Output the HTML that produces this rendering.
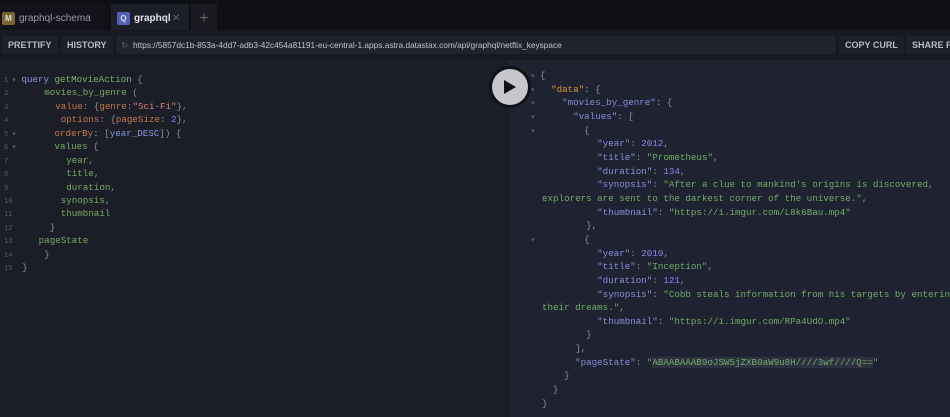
<!DOCTYPE html>
<html style="width:950px;height:417px;overflow:hidden"><head><style>
*{margin:0;padding:0;box-sizing:border-box}
body{width:950px;height:417px;background:#1c1e28;overflow:hidden;font-family:"Liberation Sans",sans-serif;position:relative}
.tabs{position:absolute;left:0;top:0;width:950px;height:30px;background:#0f1016}
.tab{position:absolute;top:4px;height:26px;font-size:10px;color:#9a9ca6;line-height:29px}
.ic{position:absolute;top:8px;width:13px;height:13px;border-radius:2px;font-size:8px;font-weight:bold;color:#ddd;text-align:center;line-height:13px}
.tb{position:absolute;top:30px;left:0;width:950px;height:30px;background:#171821}
.btn{position:absolute;top:6px;height:18px;line-height:18px;font-size:9px;font-weight:bold;color:#b8bac4;background:#1e2029;padding:0 6px;border-radius:2px}
.url{position:absolute;left:116px;top:6px;width:720px;height:18px;background:#20222d;border-radius:3px;font-size:8.3px;color:#c3c5cc;line-height:18px;padding-left:17px}
.pane{position:absolute}
pre{position:absolute;font-family:"Liberation Mono",monospace;font-size:9.2px;white-space:pre}
pre span{line-height:0}
.left{left:0;top:60px;width:509px;height:357px;background:#1b1d27}
.right{left:509px;top:60px;width:441px;height:357px;background:#1f2230}
.kw{color:#8a94dd}.df{color:#7fb56b}.pr{color:#76ab62}.ar{color:#c8784a}.st{color:#d98080}.nm{color:#8a87e6}
.k{color:#8591da}.s{color:#72ad67}.n{color:#8a87e6}.o{color:#d99a3a}
.ln{color:#5a5d68;font-size:7px}
</style></head><body>
<div class="tabs">
 <div class="tab" style="left:0;width:105px;background:#13141b"><div class="ic" style="left:2px;background:#7a6430">M</div><span style="position:absolute;left:19px">graphql-schema</span></div>
 <div class="tab" style="left:111px;width:78px;background:#1c1e28;color:#e2e3e8"><div class="ic" style="left:6px;background:#5360b8">Q</div><span style="position:absolute;left:23px;font-weight:bold">graphql</span><span style="position:absolute;left:61px;color:#666">✕</span></div>
 <div class="tab" style="left:191px;width:26px;background:#191a22;color:#666;font-size:16px;text-align:center">+</div>
</div>
<div class="tb">
 <div class="btn" style="left:2px">PRETTIFY</div>
 <div class="btn" style="left:61px">HISTORY</div>
 <div class="url"><span style="position:absolute;left:5px;color:#666">↻</span>https://5857dc1b-853a-4dd7-adb3-42c454a81191-eu-central-1.apps.astra.datastax.com/api/graphql/netflix_keyspace</div>
 <div class="btn" style="left:839px">COPY CURL</div>
 <div class="btn" style="left:906px;width:60px">SHARE PL</div>
</div>
<div class="pane left"></div>
<div class="pane right"></div>
<pre style="left:4px;top:73px;line-height:13.43px;color:#8c8f9a"><span class="ln">1 ▾</span> <span class="kw">query</span> <span class="df">getMovieAction</span> {
<span class="ln">2  </span>     <span class="pr">movies_by_genre</span> (
<span class="ln">3  </span>       <span class="ar">value</span>: {<span class="ar">genre</span>:<span class="st">"Sci-Fi"</span>},
<span class="ln">4  </span>        <span class="ar">options</span>: {<span class="ar">pageSize</span>: <span class="nm">2</span>},
<span class="ln">5 ▾</span>       <span class="ar">orderBy</span>: [<span class="kw">year_DESC</span>]) {
<span class="ln">6 ▾</span>       <span class="pr">values</span> {
<span class="ln">7  </span>         <span class="pr">year</span>,
<span class="ln">8  </span>         <span class="pr">title</span>,
<span class="ln">9  </span>         <span class="pr">duration</span>,
<span class="ln">10 </span>        <span class="pr">synopsis</span>,
<span class="ln">11 </span>        <span class="pr">thumbnail</span>
<span class="ln">12 </span>      }
<span class="ln">13 </span>    <span class="pr">pageState</span>
<span class="ln">14 </span>     }
<span class="ln">15 </span> }</pre>
<pre style="left:531px;top:69px;line-height:13.65px;color:#8c8f9a"><span class="ln">▾</span> {
<span class="ln">▾</span>   <span class="o">"data"</span>: {
<span class="ln">▾</span>     <span class="k">"movies_by_genre"</span>: {
<span class="ln">▾</span>       <span class="k">"values"</span>: [
<span class="ln">▾</span>         {
            <span class="k">"year"</span>: <span class="n">2012</span>,
            <span class="k">"title"</span>: <span class="s">"Prometheus"</span>,
            <span class="k">"duration"</span>: <span class="n">134</span>,
            <span class="k">"synopsis"</span>: <span class="s">"After a clue to mankind's origins is discovered,</span>
  <span class="s">explorers are sent to the darkest corner of the universe."</span>,
            <span class="k">"thumbnail"</span>: <span class="s">"https://i.imgur.com/L8k6Bau.mp4"</span>
          },
<span class="ln">▾</span>         {
            <span class="k">"year"</span>: <span class="n">2010</span>,
            <span class="k">"title"</span>: <span class="s">"Inception"</span>,
            <span class="k">"duration"</span>: <span class="n">121</span>,
            <span class="k">"synopsis"</span>: <span class="s">"Cobb steals information from his targets by entering</span>
  <span class="s">their dreams."</span>,
            <span class="k">"thumbnail"</span>: <span class="s">"https://i.imgur.com/RPa4UdO.mp4"</span>
          }
        ],
        <span class="k">"pageState"</span>: "<span class="s" style="background:#2d3140">ABAABAAAB9oJSW5jZXB0aW9u8H////3wf////Q==</span>"
      }
    }
  }</pre>
<div style="position:absolute;left:489px;top:66px;width:42px;height:42px;border-radius:50%;background:#111218"></div>
<div style="position:absolute;left:492px;top:69px;width:36px;height:36px;border-radius:50%;background:#c6c7cc"></div>
<svg style="position:absolute;left:503px;top:79px" width="14" height="16"><path d="M1 1 L13 8 L1 15 Z" fill="#111"/></svg>
</body></html>
